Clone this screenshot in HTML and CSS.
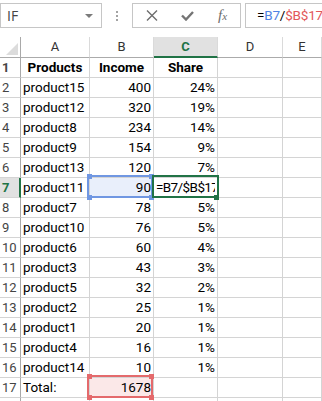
FILE: index.html
```html
<!DOCTYPE html>
<html lang="en">
<head>
<meta charset="UTF-8"/>
<meta name="viewport" content="width=device-width, initial-scale=1.0"/>
<title>Share of income</title>
<link rel="stylesheet" href="styles.css">
</head>
<body>

<!-- Formula bar -->
<div class="toolbar">
  <div class="namebox"><span>IF</span><span class="caret"></span></div>
  <div class="grip"><i></i><i></i><i></i></div>
  <div class="fnbox">
    <svg class="ico-x" width="12" height="11" viewBox="0 0 12 11"><path d="M1 0.5L11 10.5M11 0.5L1 10.5" stroke="#6d6d6d" stroke-width="1.4" fill="none"/></svg>
    <svg class="ico-ok" width="13" height="10" viewBox="0 0 13 10"><path d="M1 4.5L5 8.5L12 1" stroke="#747474" stroke-width="2.4" fill="none"/></svg>
    <span class="fx">f<small>x</small></span>
  </div>
  <div class="formula">=<span class="c-blue">B7</span>/<span class="c-red">$B$17</span></div>
</div>

<!-- Grid -->
<div class="sheet">
  <div class="row head">
    <div class="corner"><span class="tri"></span></div>
    <div>A</div><div>B</div><div class="on">C</div><div>D</div><div>E</div>
  </div>
  <div class="row bold"><div class="rn">1</div><div class="ctr">Products</div><div class="ctr">Income</div><div class="ctr">Share</div><div></div><div></div></div>
  <div class="row"><div class="rn">2</div><div>product15</div><div class="num">400</div><div class="num">24%</div><div></div><div></div></div>
  <div class="row"><div class="rn">3</div><div>product12</div><div class="num">320</div><div class="num">19%</div><div></div><div></div></div>
  <div class="row"><div class="rn">4</div><div>product8</div><div class="num">234</div><div class="num">14%</div><div></div><div></div></div>
  <div class="row"><div class="rn">5</div><div>product9</div><div class="num">154</div><div class="num">9%</div><div></div><div></div></div>
  <div class="row"><div class="rn">6</div><div>product13</div><div class="num">120</div><div class="num">7%</div><div></div><div></div></div>
  <div class="row">
    <div class="rn on">7</div><div>product11</div>
    <div class="num ref ref-blue">90<i class="h tl"></i><i class="h tr"></i><i class="h bl"></i><i class="h br"></i></div>
    <div class="edit"><span class="clip">=B7/$B$17</span><i class="fill"></i></div>
    <div></div><div></div>
  </div>
  <div class="row"><div class="rn">8</div><div>product7</div><div class="num">78</div><div class="num">5%</div><div></div><div></div></div>
  <div class="row"><div class="rn">9</div><div>product10</div><div class="num">76</div><div class="num">5%</div><div></div><div></div></div>
  <div class="row"><div class="rn">10</div><div>product6</div><div class="num">60</div><div class="num">4%</div><div></div><div></div></div>
  <div class="row"><div class="rn">11</div><div>product3</div><div class="num">43</div><div class="num">3%</div><div></div><div></div></div>
  <div class="row"><div class="rn">12</div><div>product5</div><div class="num">32</div><div class="num">2%</div><div></div><div></div></div>
  <div class="row"><div class="rn">13</div><div>product2</div><div class="num">25</div><div class="num">1%</div><div></div><div></div></div>
  <div class="row"><div class="rn">14</div><div>product1</div><div class="num">20</div><div class="num">1%</div><div></div><div></div></div>
  <div class="row"><div class="rn">15</div><div>product4</div><div class="num">16</div><div class="num">1%</div><div></div><div></div></div>
  <div class="row"><div class="rn">16</div><div>product14</div><div class="num">10</div><div class="num">1%</div><div></div><div></div></div>
  <div class="row">
    <div class="rn">17</div><div>Total:</div>
    <div class="num ref ref-red">1678<i class="h tl"></i><i class="h tr"></i><i class="h bl"></i><i class="h br"></i></div>
    <div></div><div></div><div></div>
  </div>
  <div class="row"><div class="rn"></div><div></div><div></div><div></div><div></div><div></div></div>
</div>

</body>
</html>
```

FILE: styles.css
```css
*{box-sizing:border-box;margin:0;padding:0;}
body{font-family:Roboto,'Liberation Sans',sans-serif;background:#fff;color:#000;width:322px;height:401px;overflow:hidden;}

/* formula bar */
.toolbar{display:flex;align-items:flex-start;height:37px;padding-top:3px;white-space:nowrap;}
.namebox{flex:none;width:102px;height:25px;border:1px solid #c6c6c6;display:flex;align-items:center;justify-content:space-between;padding:0 8px 0 6px;font-family:'Open Sans',sans-serif;font-size:14px;color:#444;}
.caret{width:0;height:0;border-left:4px solid transparent;border-right:4px solid transparent;border-top:4px solid #7b7b7b;}
.grip{flex:none;width:30px;height:25px;display:flex;flex-direction:column;align-items:center;justify-content:center;gap:2px;}
.grip i{width:2px;height:2px;background:#a3a3a3;}
.fnbox{flex:none;width:109px;height:25px;border:1px solid #c6c6c6;display:flex;align-items:center;padding-left:13px;}
.ico-ok{margin-left:23px;}
.fx{margin-left:24px;font-family:'Liberation Serif',serif;font-style:italic;font-size:15px;color:#6d6d6d;line-height:1;}
.fx small{font-size:11px;}
.formula{flex:none;margin-left:4px;width:77px;height:25px;border:1px solid #c6c6c6;border-right:none;padding-left:11px;font-size:13.5px;letter-spacing:-0.2px;line-height:23px;overflow:hidden;}
.c-blue{color:#4f82e3;}
.c-red{color:#e2585a;}

/* grid */
.sheet{font-size:13.5px;}
.row{display:grid;grid-template-columns:21px 69px 64px 64px 65px 39px;height:20px;}
.row>div{border-right:1px solid #d4d4d4;border-bottom:1px solid #d4d4d4;padding:0 2px;line-height:19px;white-space:nowrap;}
.row.bold{font-weight:bold;}
.ctr{text-align:center;}
.num{text-align:right;}
.rn{color:#444;font-size:13px;border-right-color:#a9a9a9 !important;}
.rn.on{background:#e1e1e1;color:#217346;font-weight:bold;border-right:2px solid #217346 !important;}

.head{height:21px;}
.head>div{text-align:center;color:#333;font-size:13px;line-height:20px;border-bottom-color:#ababab !important;border-right-color:#dadada !important;}
.head .corner{display:flex;align-items:flex-end;justify-content:flex-end;padding:0 2px 2px 0;border-right-color:#a9a9a9 !important;}
.tri{width:12px;height:12px;background:#dcdcdc;clip-path:polygon(100% 0,100% 100%,0 100%);}
.head .on{background:#e1e1e1;color:#217346;font-weight:bold;border-bottom:2px solid #217346 !important;line-height:19px;}

/* reference highlights */
.ref{position:relative;}
.ref::before{content:"";position:absolute;left:-3px;top:-3px;right:0;bottom:-1px;border:2px solid;}
.ref .h{position:absolute;width:5px;height:5px;}
.h.tl{left:-3px;top:-4px;}
.h.tr{right:-1px;top:-4px;}
.h.bl{left:-3px;bottom:-3px;}
.h.br{right:-1px;bottom:-3px;}
.ref-blue{background:#e9effb;}
.ref-blue::before{border-color:#7097e2;}
.ref-blue .h{background:#7097e2;}
.ref-red{background:#fbe8e8;}
.ref-red::before{border-color:#e46a6c;}
.ref-red .h{background:#e46a6c;}

.edit{position:relative;padding-left:2px !important;letter-spacing:-0.6px;}
.edit::before{content:"";position:absolute;left:-2px;top:-3px;right:-2px;bottom:-1px;border:2px solid #217346;}
.edit .fill{position:absolute;right:-2px;bottom:-3px;width:5px;height:5px;background:#217346;}
.clip{display:block;overflow:hidden;}
```
